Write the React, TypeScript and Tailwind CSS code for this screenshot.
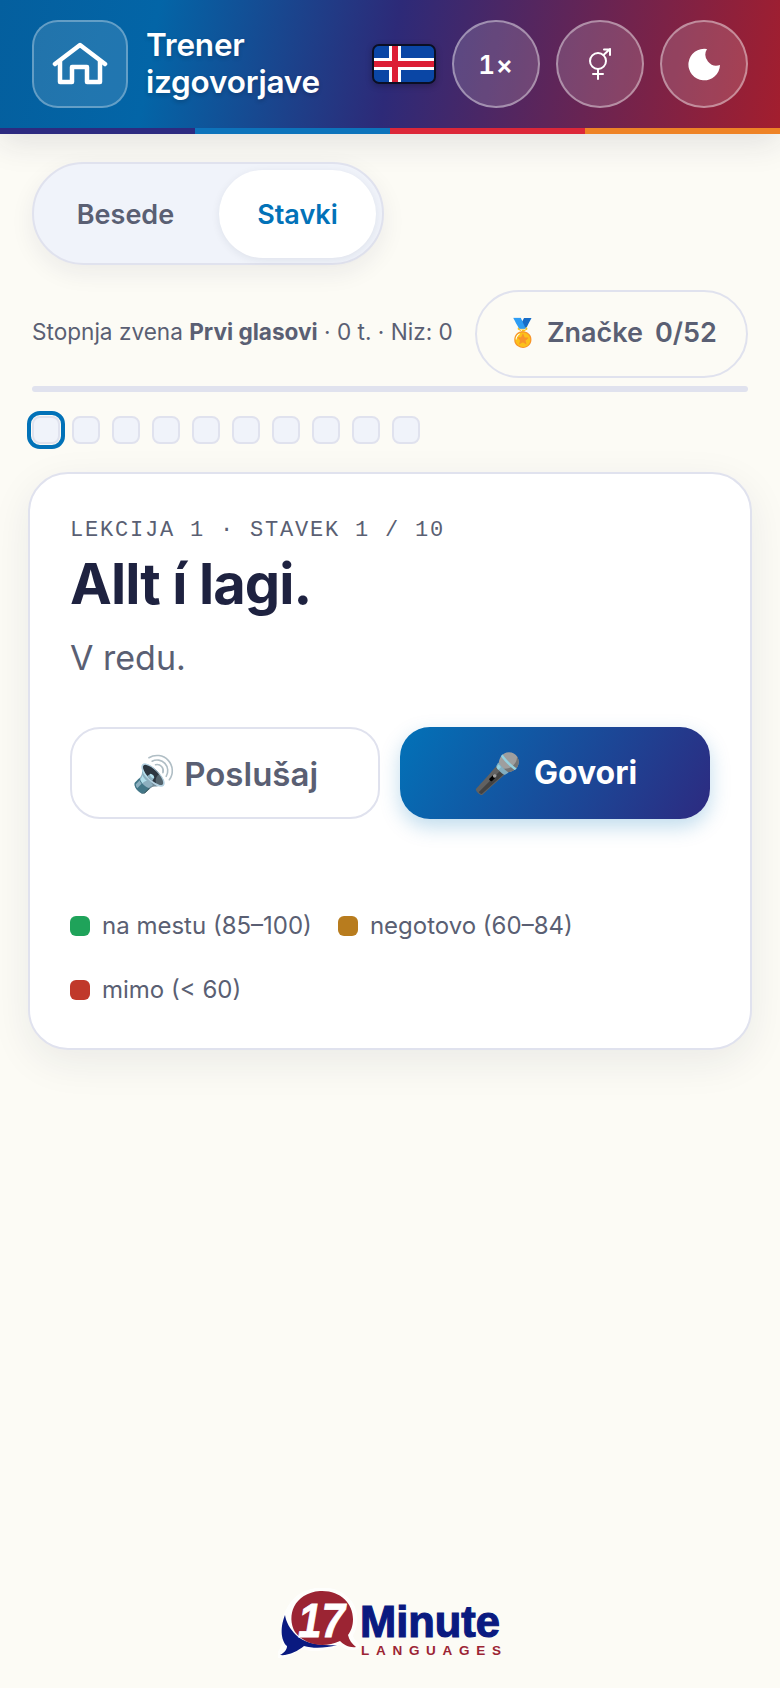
const dots = [0, 1, 2, 3, 4, 5, 6, 7, 8, 9];

function Logo() {
  return (
    <svg width="224" height="70" viewBox="0 0 224 70" className="block">
      <path d="M42 3 C62 2 76 15 76 31 C76 38 74 43 71 47 C72 52 75 55 78 58 C72 60 66 57 62 53 C50 60 34 62 22 56 C16 62 8 67 2 67 C6 62 8 56 8 48 C4 30 14 5 42 3 Z" fill="#fff" stroke="#fff" strokeWidth="7" strokeLinejoin="round" opacity="0.75" />
      <path d="M7 27 C1 42 4 54 9 58 C9 62 6 65 2 67 C10 68 20 63 26 58 C36 61 48 60 59 57 C40 58 26 55 18 47 C12 41 8 34 7 27 Z" fill="#0a1a80" />
      <path d="M42 3 C62 2 75 15 75 31 C75 38 73 43 70 47 C71 52 74 56 78 59 C72 60 66 57 62 53 C44 61 26 56 17 44 C8 28 16 5 42 3 Z" fill="#9b2433" />
      <text x="20" y="49" fill="#fff" fontFamily="'Liberation Sans', sans-serif" fontSize="49" fontWeight="700" fontStyle="italic" textLength="47" lengthAdjust="spacingAndGlyphs" stroke="#fff" strokeWidth="0.8">17</text>
      <text x="82" y="49" fill="#0a1a80" fontFamily="'Liberation Sans', sans-serif" fontSize="44" fontWeight="700" textLength="140" lengthAdjust="spacingAndGlyphs" stroke="#0a1a80" strokeWidth="1.2">Minute</text>
      <text x="83" y="67" fill="#9b2433" fontFamily="'Liberation Sans', sans-serif" fontSize="13.5" fontWeight="700" textLength="140">LANGUAGES</text>
    </svg>
  );
}

function Flag() {
  return (
    <svg width="64" height="40" viewBox="0 0 64 40" className="block">
      <defs>
        <clipPath id="flagClip">
          <rect x="1" y="1" width="62" height="38" rx="6" />
        </clipPath>
      </defs>
      <g clipPath="url(#flagClip)">
        <rect width="64" height="40" fill="#0a46a5" />
        <rect x="17" width="12" height="40" fill="#fff" />
        <rect y="14" width="64" height="12" fill="#fff" />
        <rect x="20" width="6" height="40" fill="#dc1e35" />
        <rect y="17" width="64" height="6" fill="#dc1e35" />
      </g>
      <rect x="1" y="1" width="62" height="38" rx="6" fill="none" stroke="#0b0f24" strokeWidth="2" />
    </svg>
  );
}

export default function App() {
  return (
    <div className="min-h-screen flex flex-col bg-[#fcfbf5] text-[#5a5f73] font-['Inter',sans-serif]">
      {/* Header */}
      <header className="shadow-[0_8px_32px_rgba(30,34,64,0.12)]">
        <div className="h-32 px-8 flex items-center bg-[linear-gradient(100deg,#045f9e_0%,#0365a7_20%,#2d2a78_50%,#a31e2e_100%)]">
          <button className="w-24 h-[88px] shrink-0 rounded-[26px] border-2 border-white/30 bg-white/12 flex items-center justify-center">
            <svg width="56" height="44" viewBox="0 0 56 44" fill="none" stroke="#fff" strokeWidth="4.5" strokeLinecap="round" strokeLinejoin="round">
              <path d="M3 22 L28 3 L53 22" />
              <path d="M8 19 V40 H20 V25 H35 V40 H48 V19" />
            </svg>
          </button>
          <div className="ml-[18px] pb-0.5 text-white text-[31.5px] leading-[37px] font-semibold tracking-[-0.2px] [text-shadow:0_2px_4px_rgba(0,0,0,0.2)]">
            Trener<br />izgovorjave
          </div>
          <div className="ml-auto flex items-center gap-4">
            <div className="shadow-[0_2px_6px_rgba(0,0,0,0.25)] rounded-md"><Flag /></div>
            <button className="w-[88px] h-[88px] rounded-full border-2 border-white/40 bg-white/15 text-white text-[26px] font-semibold tabular-nums tracking-[1px]">1×</button>
            <button className="w-[88px] h-[88px] rounded-full border-2 border-white/40 bg-white/15 flex items-center justify-center">
              <svg width="24" height="32" viewBox="0 0 24 32" fill="none" stroke="#fff" strokeWidth="2" strokeLinecap="round">
                <circle cx="10" cy="13" r="8" />
                <path d="M15.5 7 L22 1 M16 1.5 H22 V7 M10 21 V31 M5 26 H15" />
              </svg>
            </button>
            <button className="w-[88px] h-[88px] rounded-full border-2 border-white/40 bg-white/15 flex items-center justify-center">
              <svg width="33" height="33" viewBox="0 0 33 33">
                <path d="M19 1 A15.8 15.8 0 1 0 32 17 A11 11 0 0 1 19 1 Z" fill="#fff" />
              </svg>
            </button>
          </div>
        </div>
        <div className="h-1.5 grid grid-cols-4">
          <div className="bg-[#2d2a80]" />
          <div className="bg-[#0d73bb]" />
          <div className="bg-[#dc2739]" />
          <div className="bg-[#ee8326]" />
        </div>
      </header>

      {/* Tabs */}
      <div className="px-8 pt-7">
        <div className="w-[352px] h-[103px] p-1.5 rounded-full border-2 border-[#e0e2ee] bg-[#f0f3fa] flex items-center shadow-[0_8px_24px_rgba(30,34,64,0.07)]">
          <div className="w-[172px] mr-2 pt-[3px] text-center text-[27px] font-semibold">Besede</div>
          <div className="w-[158px] h-[88px] pt-[3px] rounded-full bg-white flex items-center justify-center text-[27px] font-semibold text-[#0272b8] shadow-[0_2px_8px_rgba(30,34,64,0.08)]">Stavki</div>
        </div>
      </div>

      {/* Stats */}
      <div className="px-8 mt-[25px] flex items-center justify-between">
        <div className="pb-1 text-[22.6px] whitespace-nowrap">Stopnja zvena <b className="font-bold">Prvi glasovi</b> · 0 t. · Niz: 0</div>
        <button className="w-[273px] h-[88px] pb-[2px] rounded-full border-2 border-[#e0e2ee] flex items-center justify-center gap-3 text-[27px] font-semibold whitespace-nowrap">
          <span>🏅 Značke</span><span>0/52</span>
        </button>
      </div>
      <div className="mx-8 mt-2 h-1.5 rounded-full bg-[#e0e2ee]" />

      <div className="px-8 mt-6 flex gap-3">
        {dots.map((d) => (
          <div
            key={d}
            className={
              d === 0
                ? "w-7 h-7 rounded-lg border-2 border-[#e0e2ee] bg-[#f0f3fa] outline-4 outline-offset-1 outline-[#0272b8]"
                : "w-7 h-7 rounded-lg border-2 border-[#e0e2ee] bg-[#f0f3fa]"
            }
          />
        ))}
      </div>

      {/* Card */}
      <main className="mx-7 mt-7 h-[578px] px-10 pt-[43px] rounded-[40px] border-2 border-[#e0e2ee] bg-white shadow-[0_12px_40px_rgba(30,34,64,0.08)]">
        <div className="font-['Liberation_Mono',monospace] text-[22px] leading-7 tracking-[1.8px]">LEKCIJA 1 · STAVEK 1 / 10</div>
        <h1 className="mt-[5px] text-[56px] leading-[68px] font-bold tracking-[-0.9px] text-[#1e2240]">Allt í lagi.</h1>
        <div className="mt-[20px] text-[34px] leading-10">V redu.</div>
        <div className="mt-[49px] grid grid-cols-2 gap-5">
          <button className="h-[92px] rounded-[30px] border-2 border-[#e0e2ee] bg-white text-[33px] font-semibold"><span className="text-[35px]">🔊</span> Poslušaj</button>
          <button className="h-[92px] rounded-[30px] bg-[linear-gradient(120deg,#0272b8,#2d2a80)] text-white text-[32px] font-bold shadow-[0_8px_20px_rgba(2,114,184,0.25)] flex items-center justify-center gap-3"><span className="text-[39px]">🎤</span><span>Govori</span></button>
        </div>
        <div className="mt-[97px] flex flex-wrap gap-x-[26px] gap-y-11 text-[24px] leading-5">
          <div className="flex items-center gap-3"><span className="w-5 h-5 rounded-md bg-[#1fa35a]" />na mestu (85–100)</div>
          <div className="flex items-center gap-3"><span className="w-5 h-5 rounded-md bg-[#b87c1e]" />negotovo (60–84)</div>
          <div className="w-full flex items-center gap-3"><span className="w-5 h-5 rounded-md bg-[#c0392b]" />mimo (&lt; 60)</div>
        </div>
      </main>

      {/* Logo */}
      <footer className="mt-auto pb-[30px] flex justify-center">
        <Logo />
      </footer>
    </div>
  );
}
